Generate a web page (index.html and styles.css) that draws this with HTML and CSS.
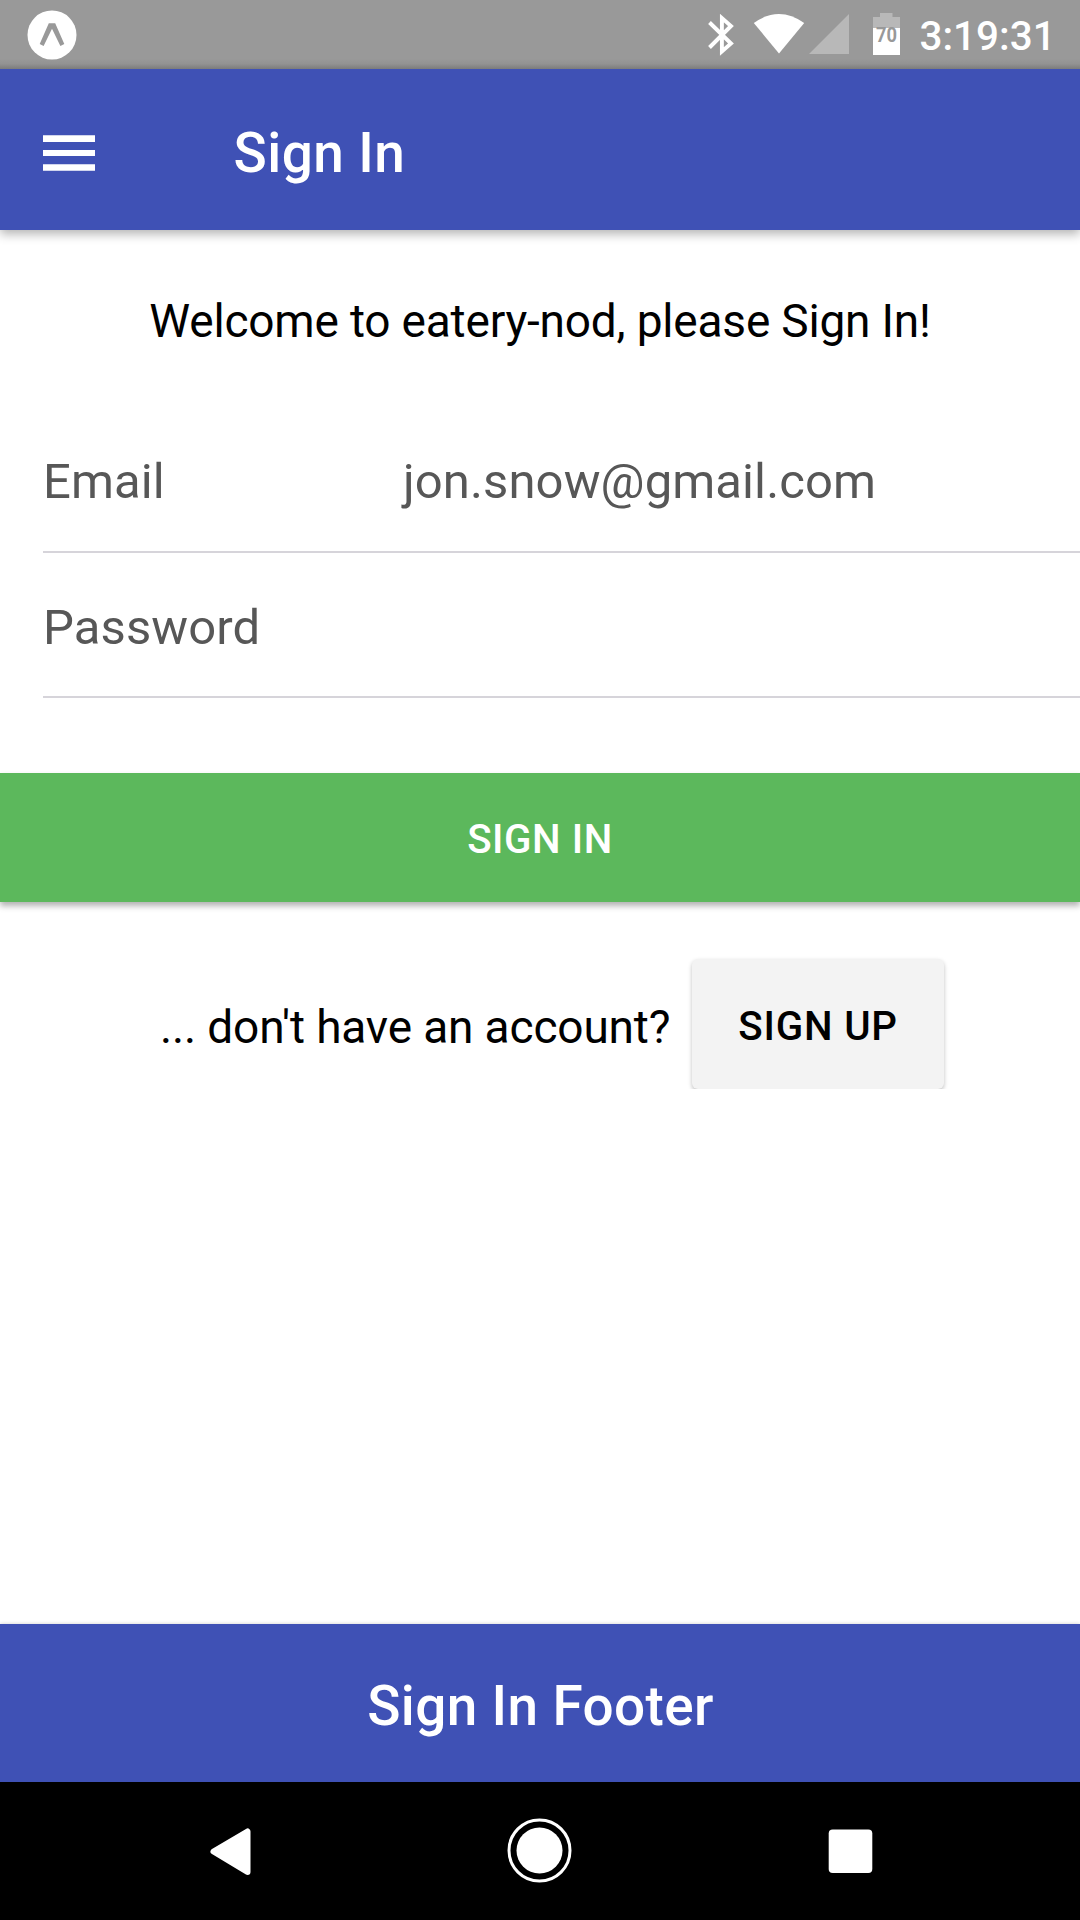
FILE: index.html
```html
<!DOCTYPE html>
<html lang="en">
<head>
<meta charset="utf-8">
<title>Sign In</title>
<link rel="stylesheet" href="styles.css">
</head>
<body>
<div class="screen">
  <div class="status-bar">
    <svg class="app-icon" viewBox="0 0 50 50" aria-hidden="true">
      <circle cx="25" cy="25" r="24.5" fill="#fff"/>
      <path d="M21.8 13.3H28.2L37.3 34 33.4 36 25 18.8 16.6 36 12.7 34Z" fill="#999"/>
    </svg>
    <div class="status-right">
      <svg class="status-icons" viewBox="0 0 200 69" aria-hidden="true">
        <path d="M9.5 22.500 31 43.500 21.900 51.500V18L31 26 9.500 47.500" fill="none" stroke="#fff" stroke-width="3.900"/>
        <path d="M53.800 23Q79 5 104.200 23L79 53.500Z" fill="#fff"/>
        <path d="M149 14V54H109Z" fill="#b8b8b8"/>
        <path d="M173 28V17H180V13H192.500V17H200V28Z" fill="#b8b8b8"/>
        <path d="M173 28H200V55H173Z" fill="#fff"/>
        <text class="battery-level" x="186.400" y="41.700" textLength="21" lengthAdjust="spacingAndGlyphs">70</text>
      </svg>
      <span class="clock">3:19:31</span>
    </div>
  </div>
  <header class="header">
    <svg class="menu-icon" viewBox="0 0 52 36" aria-hidden="true">
      <path d="M0 .3H52V7H0ZM0 15H52V21H0ZM0 29.200H52V35.800H0Z" fill="#fff"/>
    </svg>
    <h1 class="title">Sign In</h1>
  </header>
  <main class="content">
    <p class="welcome">Welcome to eatery-nod, please Sign In!</p>
    <form class="form">
      <div class="field"><span class="label">Email</span><span class="value">jon.snow@gmail.com</span></div>
      <div class="field"><span class="label">Password</span></div>
      <button class="sign-in" type="button">SIGN IN</button>
    </form>
    <div class="sign-up-row">
      <span class="question">... don't have an account?</span>
      <button class="sign-up" type="button">SIGN UP</button>
    </div>
  </main>
  <footer class="footer">Sign In Footer</footer>
  <nav class="nav-bar">
    <svg class="nav-icons" viewBox="0 0 1080 138" aria-hidden="true">
      <path d="M213.500 69.500 247.500 49.500V90Z" fill="#fff" stroke="#fff" stroke-width="6" stroke-linejoin="round"/>
      <circle cx="539.500" cy="68.500" r="23" fill="#fff"/>
      <circle cx="539.500" cy="68.500" r="30.500" fill="none" stroke="#fff" stroke-width="3"/>
      <rect x="828.700" y="47.500" width="43.600" height="43.600" rx="4" fill="#fff"/>
    </svg>
  </nav>
</div>
</body>
</html>
```
FILE: styles.css
```css
* { box-sizing: border-box; }

body {
  margin: 0;
  background: #fff;
  font-family: Roboto, "Liberation Sans", sans-serif;
  color: #000;
}

.screen {
  display: flex;
  flex-direction: column;
  width: 1080px;
  height: 1920px;
  overflow: hidden;
}

.status-bar {
  display: flex;
  align-items: flex-start;
  justify-content: space-between;
  height: 69px;
  padding-left: 26.5px;
  background: linear-gradient(#999 0 59px, #929292 64px, #7b7b7b 69px);
}

.app-icon { width: 50px; height: 50px; margin-top: 9.5px; }

.status-right { display: flex; width: 380px; }
.status-icons { width: 200px; height: 69px; flex: none; }
.battery-level {
  font-size: 20.5px;
  font-weight: 700;
  text-anchor: middle;
  fill: #999;
}
.clock {
  margin-left: 19.5px;
  padding-top: 2px;
  line-height: 70px;
  font-size: 40.400px;
  font-weight: 500;
  color: #fff;
  white-space: nowrap;
}

.header {
  display: flex;
  align-items: center;
  height: 161px;
  padding-left: 43px;
  background: #3f51b5;
  box-shadow: 0 4px 10px rgba(0, 0, 0, .3);
  clip-path: inset(0 0 -30px 0);
  z-index: 1;
}
.menu-icon { width: 52px; height: 36px; margin-top: 6px; }
.title {
  margin: 0 0 0 138.5px;
  padding-top: 8px;
  font-size: 54.900px;
  font-weight: 500;
  line-height: 153px;
  letter-spacing: .45px;
}

.title, .footer { color: #fff; }

.content { flex: 1; padding-top: 58px; }

.welcome {
  margin: 0;
  font-size: 46px;
  line-height: 66px;
  text-align: center;
  letter-spacing: -.19px;
}

.form { margin-top: 53px; }
.field {
  display: flex;
  align-items: center;
  height: 145px;
  margin-left: 43px;
  padding-top: 5px;
  border-bottom: 2px solid #d6d4da;
  font-size: 49px;
  letter-spacing: .1px;
  color: #575757;
}
.field:first-child { height: 146px; padding-top: 4px; }
.label { width: 360px; }

.sign-in, .sign-up {
  display: block;
  margin: 0;
  border: 0;
  height: 129px;
  padding: 4px 0 0;
  font: 500 40.300px/125px Roboto, "Liberation Sans", sans-serif;
  letter-spacing: .55px;
}
.sign-in {
  width: 100%;
  margin-top: 75px;
  background: #5cb85c;
  color: #fff;
  box-shadow: 0 4px 6px rgba(0, 0, 0, .3);
}

.sign-up-row {
  display: flex;
  align-items: flex-start;
  justify-content: center;
  gap: 22px;
  height: 187px;
  padding: 57px 0 0 24px;
  overflow: hidden;
  clip-path: inset(10px 0 0 0);
}
.question { font-size: 46px; line-height: 137px; letter-spacing: -.15px; }
.sign-up {
  width: 251.5px;
  height: 130px;
  border-radius: 6px;
  background: #f3f3f3;
  color: #000;
  box-shadow: 0 2px 4px rgba(0, 0, 0, .25);
  letter-spacing: .8px;
}

.footer {
  height: 158px;
  padding: 6px 0 0 1px;
  background: #3f51b5;
  box-shadow: 0 0 4px rgba(0, 0, 0, .2);
  font-size: 54.900px;
  font-weight: 500;
  line-height: 152px;
  letter-spacing: .37px;
  text-align: center;
}

.nav-bar { height: 138px; background: #000; z-index: 1; }
.nav-icons { display: block; width: 1080px; height: 138px; }
```
